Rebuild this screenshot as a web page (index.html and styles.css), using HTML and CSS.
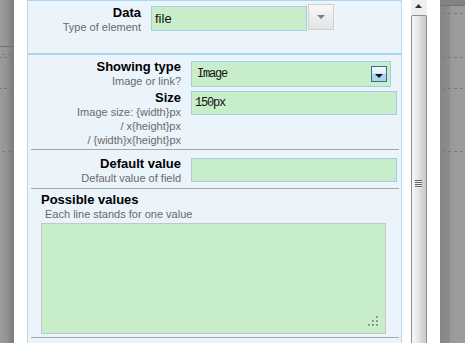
FILE: index.html
```html
<!DOCTYPE html>
<html>
<head>
<meta charset="utf-8">
<link rel="stylesheet" href="styles.css">
</head>
<body>
<div class="screen">
  <div class="backdrop backdrop-left">
    <svg width="14" height="343" viewBox="0 0 14 343">
      <line x1="0" y1="46.5" x2="14" y2="46.5" stroke="#707070" stroke-width="1"/>
      <line x1="2" y1="54.5" x2="14" y2="54.5" stroke="#7a7a7a" stroke-width="1" stroke-dasharray="3 3"/>
      <line x1="0" y1="57.5" x2="14" y2="57.5" stroke="#7a7a7a" stroke-width="1" stroke-dasharray="2 2 3 3"/>
      <line x1="0" y1="88.5" x2="14" y2="88.5" stroke="#7a7a7a" stroke-width="1" stroke-dasharray="2 2 3 3"/>
      <line x1="2" y1="151.5" x2="14" y2="151.5" stroke="#7a7a7a" stroke-width="1" stroke-dasharray="3 3 4 2"/>
    </svg>
  </div>
  <div class="spacer spacer-left"></div>

  <div class="panel">
    <section class="sec sec-top">
      <div class="row-data">
        <div class="label label-data">
          <div class="name">Data</div>
          <div class="hint">Type of element</div>
        </div>
        <div class="input input-data">file</div>
        <div class="btn-gray">
          <svg width="8" height="5" viewBox="0 0 8 5"><polygon points="0,0 8,0 4,4" fill="#7f7f7f"/></svg>
        </div>
      </div>
    </section>

    <section class="sec sec-main">
      <div class="grid-row row-type">
        <div class="label">
          <div class="name">Showing type</div>
          <div class="hint">Image or link?</div>
        </div>
        <div class="select">
          <span class="mono">Image</span>
          <span class="select-btn">
            <svg width="8" height="5" viewBox="0 0 8 5"><polygon points="0,0 8,0 4,4" fill="#111"/></svg>
          </span>
        </div>
      </div>

      <div class="grid-row row-size">
        <div class="label">
          <div class="name">Size</div>
          <div class="hint">Image size: {width}px</div>
          <div class="hint">/ x{height}px</div>
          <div class="hint">/ {width}x{height}px</div>
        </div>
        <div class="input input-wide input-size"><span class="mono">150px</span></div>
      </div>

      <hr class="sep sep-1">

      <div class="grid-row row-default">
        <div class="label">
          <div class="name">Default value</div>
          <div class="hint">Default value of field</div>
        </div>
        <div class="input input-wide input-default"></div>
      </div>

      <hr class="sep sep-2">

      <div class="possible">
        <div class="name">Possible values</div>
        <div class="hint hint-left">Each line stands for one value</div>
        <div class="textarea">
          <svg class="grip" width="12" height="12" viewBox="0 0 12 12">
            <rect x="8" y="0" width="2" height="2" fill="#8c9c8c"/>
            <rect x="10" y="2" width="1" height="1" fill="#ffffff"/>
            <rect x="4" y="4" width="2" height="2" fill="#8c9c8c"/>
            <rect x="6" y="6" width="1" height="1" fill="#ffffff"/>
            <rect x="8" y="4" width="2" height="2" fill="#8c9c8c"/>
            <rect x="10" y="6" width="1" height="1" fill="#ffffff"/>
            <rect x="0" y="8" width="2" height="2" fill="#8c9c8c"/>
            <rect x="2" y="10" width="1" height="1" fill="#ffffff"/>
            <rect x="4" y="8" width="2" height="2" fill="#8c9c8c"/>
            <rect x="6" y="10" width="1" height="1" fill="#ffffff"/>
            <rect x="8" y="8" width="2" height="2" fill="#8c9c8c"/>
            <rect x="10" y="10" width="1" height="1" fill="#ffffff"/>
          </svg>
        </div>
      </div>

      <hr class="sep sep-3">
    </section>
  </div>

  <div class="spacer spacer-mid"></div>

  <div class="scrollbar">
    <div class="scroll-up">
      <svg width="7" height="4" viewBox="0 0 7 4"><polygon points="0,4 7,4 3.5,0" fill="#333"/></svg>
    </div>
    <div class="thumb">
      <div class="gripper"></div>
    </div>
  </div>

  <div class="spacer spacer-right"></div>

  <div class="backdrop backdrop-right">
    <svg width="25" height="343" viewBox="0 0 25 343">
      <rect x="0" y="0" width="25" height="5" fill="#828282"/>
      <line x1="0" y1="5.5" x2="25" y2="5.5" stroke="#747474" stroke-width="1"/>
      <line x1="2" y1="13.5" x2="25" y2="13.5" stroke="#7a7a7a" stroke-width="1" stroke-dasharray="3 3"/>
      <line x1="2" y1="57.5" x2="25" y2="57.5" stroke="#7a7a7a" stroke-width="1" stroke-dasharray="3 3"/>
      <line x1="2" y1="88.5" x2="25" y2="88.5" stroke="#7a7a7a" stroke-width="1" stroke-dasharray="3 3"/>
      <line x1="2" y1="151.5" x2="25" y2="151.5" stroke="#7a7a7a" stroke-width="1" stroke-dasharray="3 3"/>
    </svg>
  </div>
</div>
</body>
</html>
```

FILE: styles.css
```css
html, body {
  margin: 0;
  padding: 0;
  background: #ffffff;
  overflow: hidden;
}

.screen {
  display: flex;
  width: 465px;
  height: 343px;
  overflow: hidden;
  font-family: "Liberation Sans", Arial, sans-serif;
}

.backdrop {
  flex: none;
  height: 343px;
}
.backdrop svg { display: block; }

.backdrop-left {
  width: 14px;
  background: linear-gradient(to right, #9c9c9c 0, #959595 6px, #808080 12px, #7c7c7c 14px);
}

.backdrop-right {
  width: 25px;
  background: linear-gradient(to right, #868686 0, #8b8b8b 9px, #9a9a9a 11px, #9c9c9c 25px);
}

.spacer { flex: none; height: 343px; background: #ffffff; }
.spacer-left { width: 13px; }
.spacer-mid { width: 9px; }
.spacer-right { width: 13px; }

/* panel */
.panel {
  flex: none;
  box-sizing: border-box;
  width: 375px;
  height: 343px;
  overflow: hidden;
  background: #ebf3fb;
  border-left: 1px solid #b6daef;
  border-right: 1px solid #b6daef;
}

.sec-top {
  box-sizing: border-box;
  height: 55px;
  border-top: 1px solid #acd6ee;
  border-bottom: 2px solid #a9d5ee;
}

.row-data {
  display: flex;
  align-items: flex-start;
  padding-top: 3px;
}

.label {
  text-align: right;
}
.label-data {
  width: 113px;
  margin-top: 1px;
}

.name {
  font-size: 13px;
  line-height: 15px;
  font-weight: bold;
  color: #000000;
}

.hint {
  font-size: 11px;
  line-height: 14px;
  color: #6a6a6a;
}

.input {
  box-sizing: border-box;
  height: 24px;
  background: #c8edca;
  border: 1px solid #a6cde6;
  display: flex;
  align-items: center;
  padding-left: 3px;
  font-size: 13px;
  color: #111;
}

.input-data {
  width: 156px;
  height: 25px;
  margin-left: 10px;
  margin-top: 2px;
}

.btn-gray {
  box-sizing: border-box;
  width: 26px;
  height: 26px;
  margin-left: 1px;
  border: 1px solid #d0d0d0;
  background: linear-gradient(to bottom, #f8f8f8, #ededed 50%, #e4e4e4);
  display: flex;
  justify-content: center;
  align-items: center;
}
.btn-gray svg { display: block; margin-top: 1px; }

.sec-main {
  padding-top: 4px;
}

.grid-row {
  display: grid;
  grid-template-columns: 153px auto;
  column-gap: 10px;
  align-items: start;
}

.row-size { margin-top: 2px; }
.row-default { margin-top: 6px; }

.mono {
  font-family: "Liberation Mono", "Courier New", monospace;
  font-size: 12px;
  letter-spacing: -1.2px;
  color: #111;
}

.select {
  box-sizing: border-box;
  width: 200px;
  height: 26px;
  margin-top: 2px;
  background: #c8edca;
  border: 1px solid #a6cde6;
  display: flex;
  align-items: center;
  justify-content: space-between;
  padding: 0 3px 0 5px;
}

.select-btn {
  box-sizing: border-box;
  width: 16px;
  height: 16px;
  border: 1px solid #3d6b8e;
  background: linear-gradient(to bottom, #eef7fd 0, #e3f1fa 45%, #a8d5f1 50%, #a8d5f1 100%);
  display: flex;
  justify-content: center;
  align-items: flex-end;
  padding-bottom: 2px;
}
.select-btn svg { display: block; }

.input-wide {
  width: 206px;
}
.input-size {
  margin-top: 1px;
}
.input-default {
  margin-top: 2px;
}

.sep {
  border: none;
  height: 1px;
  background: #a6a6a6;
  margin: 0 2px 0 3px;
}
.sep-1 { margin-top: 2px; }
.sep-2 { margin-top: 3px; }
.sep-3 { margin-top: 3px; }

.possible {
  padding-left: 13px;
  margin-top: 3px;
}
.hint-left {
  padding-left: 4px;
}

.textarea {
  position: relative;
  box-sizing: border-box;
  width: 345px;
  height: 111px;
  margin-top: 2px;
  background: #c8edca;
  border: 1px solid #c6c6c6;
}
.grip {
  position: absolute;
  right: 5px;
  bottom: 5px;
  display: block;
}

/* scrollbar */
.scrollbar {
  flex: none;
  width: 16px;
  height: 343px;
  background: #efefef;
  display: flex;
  flex-direction: column;
}

.scroll-up {
  height: 15px;
  display: flex;
  justify-content: center;
  align-items: flex-start;
  padding-top: 4px;
  box-sizing: border-box;
  padding-right: 2px;
}
.scroll-up svg { display: block; }

.thumb {
  flex: 1;
  box-sizing: border-box;
  border: 1px solid #8d8d8d;
  border-bottom: none;
  border-radius: 2px 2px 0 0;
  background: linear-gradient(to right, #f7f7f7 0, #ececec 35%, #d6d6d6 70%, #cbcbcb 90%, #d4d4d4 100%);
  padding-top: 164px;
  display: flex;
  justify-content: center;
}

.gripper {
  width: 7px;
  height: 8px;
  margin-right: 2px;
  background: repeating-linear-gradient(to bottom, #5f5f5f 0, #5f5f5f 1px, #f4f4f4 1px, #f4f4f4 2px);
}
```
